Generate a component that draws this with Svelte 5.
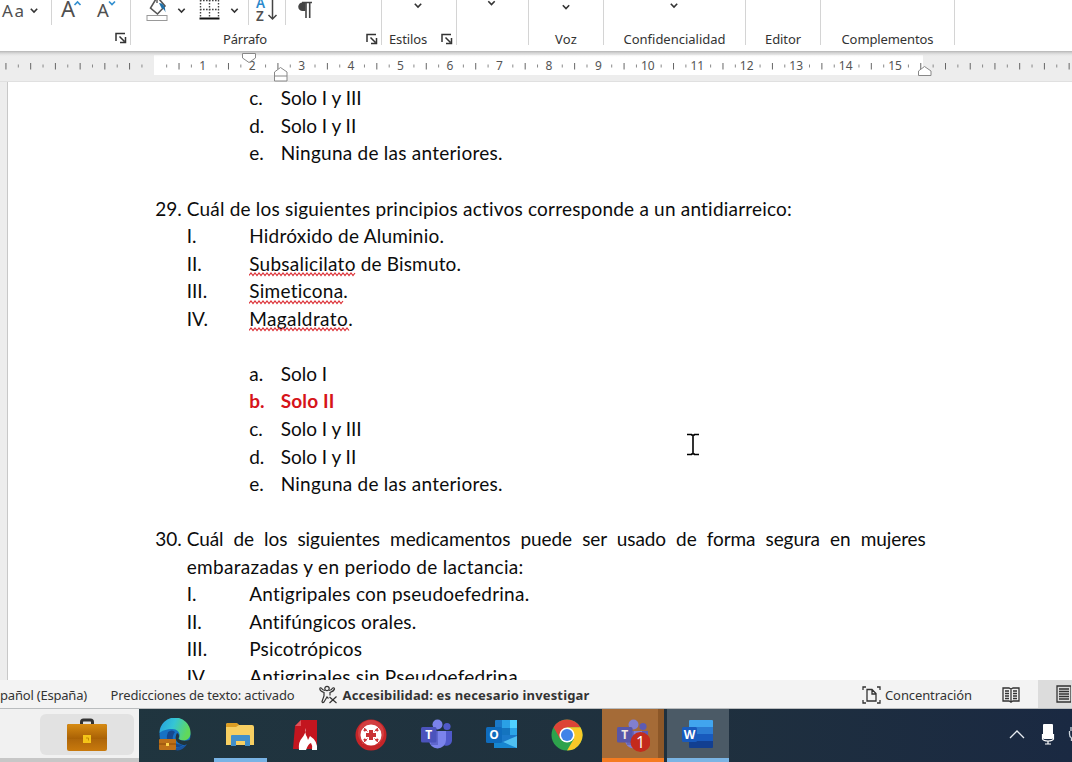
<script>
  const unit = 49.45;
  const origin = 154.3;
  const ticks = [];
  for (let k = -12; k <= 74; k++) {
    if (k === 0) continue;
    const inside = k > 0 && k < 62;
    if (inside && k % 4 === 0) continue;
    ticks.push({ x: origin + (k * unit) / 4, tall: k % 2 === 0 });
  }
  const numbers = Array.from({ length: 15 }, (_, i) => i + 1);

  const rows = [
    { kind: 'opt', mark: 'c.', text: 'Solo I y III', w: 81 },
    { kind: 'opt', mark: 'd.', text: 'Solo I y II', w: 75.5 },
    { kind: 'opt', mark: 'e.', text: 'Ninguna de las anteriores.', w: 222 },
    { kind: 'gap' },
    { kind: 'ask', mark: '29.', text: 'Cuál de los siguientes principios activos corresponde a un antidiarreico:', w: 606 },
    { kind: 'rom', mark: 'I.', text: 'Hidróxido de Aluminio.', w: 195 },
    { kind: 'rom', mark: 'II.', wrong: 'Subsalicilato', ww: 106.5, text: ' de Bismuto.', w: 105.5 },
    { kind: 'rom', mark: 'III.', wrong: 'Simeticona', ww: 94.5, text: '.', w: 5 },
    { kind: 'rom', mark: 'IV.', wrong: 'Magaldrato', ww: 99, text: '.', w: 5 },
    { kind: 'gap' },
    { kind: 'opt', mark: 'a.', text: 'Solo I', w: 46.5 },
    { kind: 'opt', mark: 'b.', text: 'Solo II', w: 54, hot: true },
    { kind: 'opt', mark: 'c.', text: 'Solo I y III', w: 81 },
    { kind: 'opt', mark: 'd.', text: 'Solo I y II', w: 75.5 },
    { kind: 'opt', mark: 'e.', text: 'Ninguna de las anteriores.', w: 222 },
    { kind: 'gap' },
    { kind: 'ask', mark: '30.', text: 'Cuál de los siguientes medicamentos puede ser usado de forma segura en mujeres', full: true },
    { kind: 'ask', mark: '', text: 'embarazadas y en periodo de lactancia:', w: 337 },
    { kind: 'rom', mark: 'I.', text: 'Antigripales con pseudoefedrina.', w: 280.5 },
    { kind: 'rom', mark: 'II.', text: 'Antifúngicos orales.', w: 167.5 },
    { kind: 'rom', mark: 'III.', text: 'Psicotrópicos', w: 113 },
    { kind: 'rom', mark: 'IV.', text: 'Antigripales sin Pseudoefedrina', w: 269 }
  ];

  // Tracks the letters so that a run fills its measured width.
  function fit(node, width) {
    if (!width) return;
    const natural = node.getBoundingClientRect().width;
    node.style.letterSpacing = (width - natural) / node.textContent.length + 'px';
  }

  function zigzag(w) {
    let d = 'M0 3.5';
    for (let x = 2, up = true; x <= w + 1; x += 2, up = !up) d += `L${x} ${up ? 1 : 3.5}`;
    return d;
  }

  const groups = [
    { w: 131, label: '', launcher: true },
    { w: 251, label: 'Párrafo', launcher: true, lw: 44 },
    { w: 75, label: 'Estilos', launcher: true, lw: 38, chev: [36, 5.5] },
    { w: 72, label: '', chev: [34.5, 3] },
    { w: 75, label: 'Voz', lw: 22, chev: [37, 7] },
    { w: 142, label: 'Confidencialidad', lw: 102, chev: [70, 5.5] },
    { w: 75, label: 'Editor', lw: 36 },
    { w: 134, label: 'Complementos', lw: 92 }
  ];

  const apps = ['edge', 'files', 'pdf', 'target', 'teams', 'outlook', 'chrome', 'teams2', 'word'];
</script>

{#snippet chevron(x, y)}
  <path d="M{x - 3.2} {y - 1.7}l3.2 3.2 3.2-3.2" fill="none" stroke="#333" stroke-width="1.6" />
{/snippet}

{#snippet teamsMark()}
  <circle cx="27" cy="8.5" r="3.6" fill="#5059c9" />
  <path d="M21 13h11v8a6 6 0 0 1-11 4z" fill="#5059c9" />
  <circle cx="17.5" cy="6.5" r="5" fill="#7b83eb" />
  <path d="M9 13h17v9a8.5 8.5 0 0 1-17 0z" fill="#7b83eb" />
  <path d="M9 13h9v14H11z" fill="#4b50b5" opacity=".55" />
  <rect x="1" y="9" width="15.5" height="15.5" rx="1.5" fill="#4b53bc" />
  <text x="8.7" y="21.2" text-anchor="middle" class="mark">T</text>
{/snippet}

<div class="window">
  <header class="ribbon">
    {#each groups as g, i}
      <section class="group" style="width:{g.w}px">
        <svg class="tools" width={g.w - 1} height="28">
          {#if i === 0}
            <text x="2" y="16.5" class="glyph" font-size="17" textLength="22">Aa</text>
            {@render chevron(34, 10.5)}
            <path d="M51.5 0V25" stroke="#d4d4d4" />
            <text x="61" y="16.5" class="glyph" font-size="22">A</text>
            <path d="M74.5 5l3-3 3 3" fill="none" stroke="#3390d0" stroke-width="1.7" />
            <text x="97" y="16.5" class="glyph" font-size="18.5">A</text>
            <path d="M109 1.5l3 3 3-3" fill="none" stroke="#3390d0" stroke-width="1.7" />
          {:else if i === 1}
            <path d="M25-1l-5.500 9 7 6 7.500-8-6-7" fill="#fff" stroke="#555" stroke-width="1.6" />
            <path d="M26-2v5" stroke="#555" stroke-width="1.4" />
            <path d="M28 3q6.500 0 6.500 9.500-1.500-4-4-4.500z" fill="#1f6fa8" />
            <rect x="16" y="15.5" width="20" height="5" fill="#fff" stroke="#999" />
            {@render chevron(50.5, 10.5)}
            <path d="M69.500 0V18M87.500 0V18M78.500 0V18M69 .5H88M69 9.500H88" stroke="#444" stroke-width="1.4" stroke-dasharray="1.6 1.4" />
            <path d="M68.500 18.500H88.500" stroke="#111" stroke-width="2" />
            {@render chevron(103.5, 10.5)}
            <path d="M117.500 0V25M154.500 0V25" stroke="#d4d4d4" />
            <text x="125" y="8" class="glyph blue" font-size="13.5">A</text>
            <text x="125" y="20.5" class="glyph bold" font-size="13.5">Z</text>
            <path d="M141.500-1V19M137.500 15l4 4 4-4" fill="none" stroke="#444" stroke-width="1.5" />
            <path d="M171 2.500h10M175 2v16M178.700 2v16" stroke="#444" stroke-width="1.6" fill="none" />
            <path d="M174.500 2.500h-3a4.200 4.200 0 0 0 0 8.500h3z" fill="#444" />
          {/if}
          {#if g.chev}{@render chevron(g.chev[0], g.chev[1])}{/if}
        </svg>
        <div class="caption">
          <span class="label"><span use:fit={g.lw}>{g.label}</span></span>
          {#if g.launcher}
            <svg class="launcher" width="12" height="12">
              <path d="M1 9V1.500H10M4.500 4.500l5 5M10.500 5V10.500H5" fill="none" stroke="#333" stroke-width="1.5" />
            </svg>
          {/if}
        </div>
      </section>
    {/each}
  </header>

  <svg class="ruler" width="1072" height="30">
    <defs>
      <linearGradient id="shade" x1="0" y1="0" x2="0" y2="1">
        <stop offset="0" stop-color="#c6c6c6" /><stop offset="1" stop-color="#ededed" stop-opacity="0" />
      </linearGradient>
    </defs>
    <rect width="1072" height="30" fill="#ededed" />
    <rect x="154" y="3" width="769" height="20" fill="#fff" />
    <rect width="1072" height="5" fill="url(#shade)" />
    <path d="M0 29.500H1072" stroke="#e0e0e0" />
    {#each ticks as t}
      <path d="M{t.x} {t.tall ? 11 : 12.5}v{t.tall ? 6.5 : 3}" stroke={t.tall ? '#666' : '#888'} stroke-width="1" />
    {/each}
    {#each numbers as n}
      <text x={153.2 + n * 49.46} y="18.3" text-anchor="middle" class="num">{n}</text>
    {/each}
    <path d="M242.500 1.500h13v4.500l-6.500 4.500-6.500-4.500z" fill="#fff" stroke="#888" />
    <path d="M274.500 29v-9l6-4.500 6.500 4.500v9zM274.500 24H287" fill="#fff" stroke="#888" />
    <path d="M918.500 23.500v-4.500l6-4.500 6.500 4.500v4.500z" fill="#fff" stroke="#888" />
  </svg>

  <main class="canvas">
    <div class="page">
      {#each rows as r}
        <div class="row {r.kind}" class:hot={r.hot}>
          {#if r.kind !== 'gap'}
            <span class="marker">{r.mark}</span>
            <span class="body" class:full={r.full}>{#if r.wrong}<span class="wrong"><span use:fit={r.ww}>{r.wrong}</span><svg width={r.ww + 2} height="5"><path d={zigzag(r.ww)} /></svg></span>{/if}{#if r.full}{r.text}{:else}<span use:fit={r.w}>{r.text}</span>{/if}</span>
          {/if}
        </div>
      {/each}
    </div>
    <svg class="caret" width="14" height="24"><path d="M1 1.500H6M8 1.500H13M1 21.500H6M8 21.500H13M7 2V21M5 2h4M5 21h4" stroke="#000" stroke-width="1.6" /></svg>
  </main>

  <footer class="status">
    <span class="lang"><span use:fit={87}>pañol (España)</span></span>
    <span class="pred"><span use:fit={184}>Predicciones de texto: activado</span></span>
    <svg class="acc" width="20" height="20" fill="none" stroke="#333" stroke-width="1.2">
      <circle cx="8" cy="3.5" r="2.2" />
      <path d="M6 5.500Q3 5 2.500 3.200 1 2 .8 4 1 6 5 7.500V11L3 16.500q.5 2 2 .5L8 12l1.500 1.500M10 5.500q3-.5 3.500-2.300 1.500-1.200 2 .8-.5 2-4.500 3.500v3M10.500 12l7 6M17.500 11.500l-7 6.500" />
    </svg>
    <b class="check"><span use:fit={247}>Accesibilidad: es necesario investigar</span></b>
    <span class="focus">
      <svg width="19" height="18" fill="none" stroke="#333" stroke-width="1.3">
        <path d="M4 1H1V4M15 1h3V4M1 14v3H4M18 14v3H15M5 3.500h5l4 4V15H5zM10 3.500V8h4" />
      </svg>
      <span use:fit={87}>Concentración</span>
    </span>
    <svg class="book" width="18" height="18" fill="none" stroke="#333" stroke-width="1.3">
      <path d="M1 2h6l2 1 2-1h6v13h-6l-2 1-2-1H1zM9 3v14M3 5h4M3 7.500h4M3 10h4M3 12.500h4M11 5h4M11 7.500h4M11 10h4M11 12.500h4" />
    </svg>
    <span class="view">
      <svg width="15" height="18" fill="none" stroke="#333" stroke-width="1.3">
        <path d="M1 1h14v16H1zM3 4h10M3 6.500h10M3 9h10M3 11.500h10M3 14h10" />
      </svg>
    </span>
  </footer>

  <nav class="taskbar">
    <div class="corner">
      <div class="tile">
        <svg width="40" height="34">
          <defs>
            <linearGradient id="lid" x1="0" y1="0" x2="0" y2="1"><stop offset="0" stop-color="#d78b12" /><stop offset="1" stop-color="#a86005" /></linearGradient>
            <linearGradient id="box" x1="0" y1="0" x2="0" y2="1"><stop offset="0" stop-color="#8d4d06" /><stop offset="1" stop-color="#c97a0d" /></linearGradient>
          </defs>
          <path d="M14.500 6V4q0-2 2-2h7q2 0 2 2v2" fill="none" stroke="#333" stroke-width="3" />
          <rect y="6" width="40" height="27" rx="2" fill="url(#box)" />
          <path d="M0 8q0-2 2-2h36q2 0 2 2v13H0z" fill="url(#lid)" />
          <rect x="16" y="17" width="8" height="8" fill="#f5c518" /><path d="M19 20h2.500v2.500" stroke="#c58a00" fill="none" />
        </svg>
      </div>
    </div>
    {#each apps as a}
      <div class="app {a}">
        <svg width="34" height="34">
          {#if a === 'edge'}
            <defs><linearGradient id="eg" x1="0" y1="0" x2="1" y2=".3"><stop offset="0" stop-color="#249de0" /><stop offset=".5" stop-color="#35c5d5" /><stop offset="1" stop-color="#61d85a" /></linearGradient></defs>
            <circle cx="17" cy="16.5" r="15.5" fill="#1672c4" />
            <path d="M1.500 15A15.500 15.500 0 0 1 32.500 15c0 8-8 9-12 6 3-4 0-10-6-10-6 0-11 2-13 4z" fill="url(#eg)" />
            <path d="M10 14q-4 9 4 14 8 3 12-2-8 2-11-4-1-4 2-8-3-3-7 0z" fill="#15488f" />
            <path d="M19 15q3 1 1.500 6 4 3 11 1l3 1-2 4q-11 1-14-4-2-4 .5-8z" fill="#20353e" />
            <path d="M17 30q7-1 12-4-5 8-12 6z" fill="#1a549f" />
            <rect x="1" y="21" width="17" height="11" rx="1" fill="#bd7019" /><path d="M1 26h17" stroke="#8a4b0b" /><rect x="8" y="25" width="3" height="3" fill="#ffd34a" />
          {:else if a === 'files'}
            <path d="M3 7q0-2 2-2h8l3 2h13q2 0 2 2v18H3z" fill="#f7cf62" />
            <path d="M3 7q0-2 2-2h9l2 2-3 2H3z" fill="#dc9e24" />
            <path d="M8 28V18q0-1 1-1h17q1 0 1 1v10h-5v-5h-9v5z" fill="#418fca" />
          {:else if a === 'pdf'}
            <path d="M6 8l6-6h16v29H4z" fill="#c3151f" />
            <path d="M6 8l6-6v6z" fill="#e0525a" />
            <path d="M17 10q-2 4 1 9l1 3 2-4q8 5 7 14h-5q1-4-1-7-3 1-5 7h-7q-1-8 3-12 4-5 4-10z" fill="#fff" />
          {:else if a === 'target'}
            <circle cx="17" cy="17" r="15.5" fill="#c52528" /><circle cx="17" cy="15" r="13" fill="#df5757" opacity=".5" />
            <circle cx="17" cy="17" r="10.5" fill="#fff" />
            <path d="M15 12h4v3h3v4h-3v3h-4v-3h-3v-4h3z" fill="#c93336" />
            <path d="M8 8l5.500 5.500M26 8l-5.500 5.500M8 26l5.500-5.500M26 26l-5.500-5.500" stroke="#cf4042" stroke-width="1" />
            <path d="M10 13l2-2M22 11l2 2M10 21l2 2M22 23l2-2" stroke="#c93336" stroke-width="2.4" />
          {:else if a === 'teams'}
            {@render teamsMark()}
          {:else if a === 'outlook'}
            <rect x="10" y="2" width="22" height="24" rx="1" fill="#1b79c9" />
            <path d="M17 2h8v8h-8z" fill="#2aa0e6" /><path d="M25 2h7v8h-7z" fill="#50d0ff" /><path d="M17 10h8v7h-8z" fill="#1474bf" /><path d="M25 10h7v7h-7z" fill="#2ca5e8" />
            <path d="M9 20l12 6 11-8v12H9z" fill="#1686d0" /><path d="M32 18v12L18 24z" fill="#4fbff0" />
            <rect x="1" y="9" width="16" height="16" rx="1.5" fill="#0f6cbd" />
            <text x="9" y="21.2" text-anchor="middle" class="mark">O</text>
          {:else if a === 'chrome'}
            <circle cx="17" cy="17" r="15.5" fill="#2da24c" />
            <path d="M3.600 9.200A15.500 15.500 0 0 1 30.400 9.200H17L10.200 20.900z" fill="#dd4437" />
            <path d="M30.400 9.200A15.500 15.500 0 0 1 17 32.500L23.800 20.900 17 9.200z" fill="#f9c928" />
            <circle cx="17" cy="17" r="7.6" fill="#fff" /><circle cx="17" cy="17" r="6" fill="#3f83e8" />
          {:else if a === 'teams2'}
            <g opacity=".85">{@render teamsMark()}</g>
            <circle cx="24.5" cy="24" r="10" fill="#c42b1c" />
            <text x="24.5" y="29.5" text-anchor="middle" class="count">1</text>
          {:else}
            <path d="M8 3q0-1 1-1h22q1 0 1 1v6H8z" fill="#41a5ee" /><path d="M8 9h24v7H8z" fill="#2b7cd3" /><path d="M8 16h24v7H8z" fill="#185abd" /><path d="M8 23h24v6q0 1-1 1H9q-1 0-1-1z" fill="#123f91" />
            <rect x="1" y="9" width="15" height="15" rx="1.5" fill="#185abd" />
            <text x="8.5" y="20.8" text-anchor="middle" class="mark">W</text>
          {/if}
        </svg>
      </div>
    {/each}
    <svg class="tray" width="66" height="30">
      <path d="M4 15l7-7 7 7" fill="none" stroke="#e8edf2" stroke-width="1.3" />
      <rect x="37" y="1" width="10" height="15" rx="1" fill="#fff" />
      <path d="M36.500 11v5q1 2 5.500 2t5.500-2v-5M42 18v3.500M39 21h6" stroke="#fff" fill="none" stroke-width="1.2" />
      <path d="M65 4v4M63.500 8v3q0 3 2 4v3" stroke="#ccd4dc" fill="none" stroke-width="1.3" />
    </svg>
  </nav>
</div>

<style>
  :global(body) { margin: 0; overflow: hidden; background: #fff; }
  .window { width: 1072px; height: 762px; overflow: hidden; display: flex; flex-direction: column; font-family: 'Noto Sans', 'Open Sans', sans-serif; color: #333; }
  svg { display: block; flex: none; }
  .ribbon { height: 52px; flex: none; display: flex; background: #fff; border-bottom: 1px solid #bdbdbd; box-sizing: border-box; }
  .group { height: 45px; box-sizing: border-box; border-right: 1px solid #d4d4d4; display: flex; flex-direction: column; flex: none; }
  .caption { height: 17px; display: flex; align-items: center; padding-top: 3px; font-size: 13px; line-height: 16px; white-space: nowrap; }
  .label { flex: 1; text-align: center; }
  .launcher { margin: 0 3px 0 7px; }
  .glyph { font-family: 'Noto Sans', sans-serif; fill: #505050; }
  .blue { fill: #2b88cc; font-weight: 600; }
  .bold { font-weight: 600; }
  .num { font: 12px 'Noto Sans', sans-serif; fill: #555; }
  .canvas { position: relative; height: 598px; flex: none; overflow: hidden; background: #ededed; padding-left: 7px; box-sizing: border-box; }
  .page { height: 640px; background: #fff; border-left: 1px solid #c8c8c8; padding: 2.4px 0 0 147.2px; font: 19px/27.56px Lato, sans-serif; color: #0c0c0c; }
  .row { height: 27.56px; display: grid; white-space: pre; }
  .ask { grid-template-columns: 31.5px 739px; }
  .rom { padding-left: 31.5px; grid-template-columns: 62.5px auto; }
  .opt { padding-left: 94px; grid-template-columns: 31.5px auto; }
  .full { white-space: normal; text-align-last: justify; letter-spacing: -.08px; }
  .hot { color: #d6141a; font-weight: 700; }
  .wrong { position: relative; display: inline-block; }
  .wrong svg { position: absolute; left: 0; bottom: 0; fill: none; stroke: #dc3238; stroke-width: 1.2; }
  .caret { position: absolute; left: 686px; top: 350.5px; }
  .status { height: 29px; flex: none; box-sizing: border-box; background: #f3f3f3; border-bottom: 1px solid #b9bcbe; display: flex; align-items: center; font-size: 13px; padding-top: 1px; white-space: nowrap; }
  .lang { width: 110.5px; }
  .pred { width: 208.5px; }
  .acc { margin-right: 3.5px; }
  .check { width: 519.5px; font-weight: 700; }
  .focus { width: 140px; display: flex; align-items: center; gap: 4px; }
  .book { margin-right: 18px; }
  .view { flex: 1; align-self: stretch; margin-top: -1px; background: #dcdcdc; display: flex; align-items: center; padding-left: 18px; }
  .taskbar { height: 53px; flex: none; display: flex; align-items: stretch; background: linear-gradient(90deg, #20363f, #1f303e 65%, #1a2942); }
  .corner { width: 139px; margin-right: 3.4px; flex: none; box-sizing: border-box; background: #f1f1f1; border-bottom: 4px solid #c7c7c7; padding: 5px 5px 3px 40px; }
  .tile { height: 41px; background: #e2e2e2; border-radius: 6px; display: flex; align-items: center; justify-content: center; }
  .app { width: 62.4px; margin: 0 1.5px; flex: none; display: flex; justify-content: center; padding-top: 9px; box-sizing: border-box; height: 53px; }
  .files { width: 53px; margin: 0 6.2px; border-bottom: 4px solid #78b3e5; }
  .teams2 { background: linear-gradient(90deg, #a56b37 91%, #8c5728 91%); border-bottom: 4px solid #f57b20; }
  .word { background: #4b5a66; border-bottom: 4px solid #7ab4e4; }
  .mark { font: 700 12px 'Open Sans', sans-serif; fill: #fff; }
  .count { font: 16px 'Open Sans', sans-serif; fill: #fff; }
  .tray { margin: 14px 0 0 auto; }
</style>
